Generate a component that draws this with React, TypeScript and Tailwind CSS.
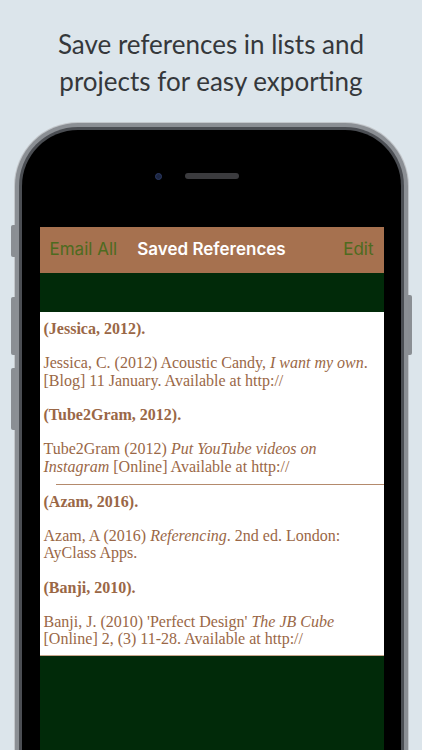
import React from 'react';

interface Entry {
    cite: string;
    lines: React.ReactNode[];
}

const firstGroup: Entry[] = [
    {
        cite: '(Jessica, 2012).',
        lines: [
            <>Jessica, C. (2012) Acoustic Candy, <i>I want my own</i>.</>,
            <>[Blog] 11 January. Available at http://</>,
        ],
    },
    {
        cite: '(Tube2Gram, 2012).',
        lines: [
            <>Tube2Gram (2012) <i>Put YouTube videos on</i></>,
            <><i>Instagram</i> [Online] Available at http://</>,
        ],
    },
];

const secondGroup: Entry[] = [
    {
        cite: '(Azam, 2016).',
        lines: [
            <>Azam, A (2016) <i>Referencing</i>. 2nd ed. London:</>,
            <>AyClass Apps.</>,
        ],
    },
    {
        cite: '(Banji, 2010).',
        lines: [
            <>Banji, J. (2010) 'Perfect Design' <i>The JB Cube</i></>,
            <>[Online] 2, (3) 11-28. Available at http://</>,
        ],
    },
];

function Group({ entries, className }: { entries: Entry[]; className: string }) {
    return (
        <div className={className}>
            {entries.map((entry, i) => (
                <div key={entry.cite} className={i > 0 ? 'mt-[17.2px]' : ''}>
                    <p className="font-bold">{entry.cite}</p>
                    <div className="mt-[17.2px]">
                        {entry.lines.map((line, j) => (
                            <p key={j} className="whitespace-nowrap">{line}</p>
                        ))}
                    </div>
                </div>
            ))}
        </div>
    );
}

export default function App() {
    return (
        <div className="w-[422px] h-[750px] overflow-hidden bg-[#dce5eb] flex flex-col items-center">
            <h1
                className="pt-[26px] text-center text-[26px] leading-[37px] text-[#35383b] font-normal"
                style={{ fontFamily: 'Lato, "Open Sans", sans-serif' }}
            >
                Save references in lists and
                <br />
                projects for easy exporting
            </h1>

            {/* phone */}
            <div className="relative mt-[22px] w-[395px] shrink-0">
                <div className="absolute left-[-3px] top-[103px] h-[32px] w-[4px] rounded-l-[2px] bg-[#8a8e93]" />
                <div className="absolute left-[-3px] top-[175px] h-[58px] w-[4px] rounded-l-[2px] bg-[#8a8e93]" />
                <div className="absolute left-[-3px] top-[246px] h-[62px] w-[4px] rounded-l-[2px] bg-[#8a8e93]" />
                <div className="absolute right-[-3px] top-[173px] h-[60px] w-[4px] rounded-r-[2px] bg-[#8a8e93]" />

                <div className="rounded-t-[64px] bg-[#c3c7cb] p-[1px] pb-0">
                    <div className="rounded-t-[63px] bg-[#8b8f94] p-[4px] pb-0">
                        <div className="rounded-t-[59px] bg-[#4b4e53] p-[3px] pb-0">
                            <div className="h-[640px] rounded-t-[56px] bg-black pl-[18px] pr-[17px] flex flex-col">
                                <div className="h-[97px] flex items-start justify-center pt-[43px]">
                                    <div className="mt-[-0.5px] h-[7px] w-[7px] rounded-full bg-[#1b2540] border border-[#2c3a66]" />
                                    <div className="ml-[23px] h-[6px] w-[54px] rounded-full bg-[#3b3b3e]" />
                                    <div className="w-[30px]" />
                                </div>

                                {/* screen */}
                                <div className="flex-1 flex flex-col bg-[#012a09]">
                                    <div
                                        className="h-[46px] bg-[#a6714f] grid grid-cols-[1fr_auto_1fr] items-center px-[10px] text-[17px]"
                                        style={{ fontFamily: 'Inter, Roboto, sans-serif' }}
                                    >
                                        <span className="justify-self-start text-[#4d6b20]">Email All</span>
                                        <span className="font-semibold text-white">Saved References</span>
                                        <span className="justify-self-end text-[#4d6b20]">Edit</span>
                                    </div>
                                    <div className="h-[39px]" />
                                    <div
                                        className="bg-white text-[16px] leading-[17.2px] text-[#9a6746] border-b border-[#c8a68c]"
                                        style={{ fontFamily: '"Liberation Serif", "Times New Roman", serif' }}
                                    >
                                        <Group entries={firstGroup} className="pl-[4px] pt-[8px] pb-[9px]" />
                                        <div className="ml-[16px] h-px bg-[#b48a6c]" />
                                        <Group entries={secondGroup} className="pl-[4px] pt-[8px] pb-[7px]" />
                                    </div>
                                </div>
                            </div>
                        </div>
                    </div>
                </div>
            </div>
        </div>
    );
}
